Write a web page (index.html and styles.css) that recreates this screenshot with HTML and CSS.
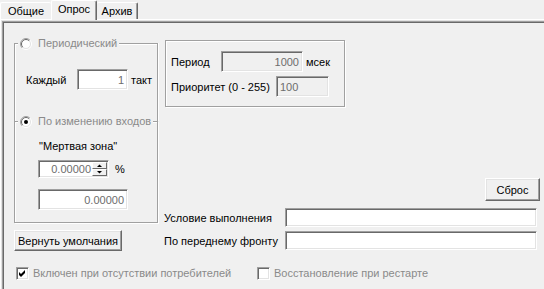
FILE: index.html
```html
<!doctype html>
<html lang="ru">
<head>
<meta charset="utf-8">
<title>Опрос</title>
<link rel="stylesheet" href="styles.css">
</head>
<body>

<div class="tabs">
  <div class="tab tab-first">Общие</div>
  <div class="tab active">Опрос</div>
  <div class="tab tab-last">Архив</div>
</div>

<div class="panel">
  <div class="main">

    <div class="left">
      <fieldset class="group group-top">
        <legend>
          <svg class="radio" width="12" height="12" viewBox="0 0 12 12">
            <circle cx="6" cy="6" r="5" fill="#fff"/>
            <path d="M2.1 9.9A5.5 5.5 0 0 1 9.9 2.1" fill="none" stroke="#a0a0a0"/>
            <path d="M9.9 2.1A5.5 5.5 0 0 1 2.1 9.9" fill="none" stroke="#fff"/>
            <path d="M2.8 9.2A4.5 4.5 0 0 1 9.2 2.8" fill="none" stroke="#696969"/>
            <path d="M9.2 2.8A4.5 4.5 0 0 1 2.8 9.2" fill="none" stroke="#e3e3e3"/>
          </svg><span class="dis">Периодический</span>
        </legend>
        <div class="every">
          <span class="every-lbl">Каждый</span>
          <span class="edit num every-edit">1</span>
          <span class="unit">такт</span>
        </div>
      </fieldset>

      <fieldset class="group group-bottom">
        <legend>
          <svg class="radio" width="12" height="12" viewBox="0 0 12 12">
            <circle cx="6" cy="6" r="5" fill="#fff"/>
            <path d="M2.1 9.9A5.5 5.5 0 0 1 9.9 2.1" fill="none" stroke="#a0a0a0"/>
            <path d="M9.9 2.1A5.5 5.5 0 0 1 2.1 9.9" fill="none" stroke="#fff"/>
            <path d="M2.8 9.2A4.5 4.5 0 0 1 9.2 2.8" fill="none" stroke="#696969"/>
            <path d="M9.2 2.8A4.5 4.5 0 0 1 2.8 9.2" fill="none" stroke="#e3e3e3"/>
            <circle cx="6" cy="6" r="2" fill="#000"/>
          </svg><span class="dis">По изменению входов</span>
        </legend>
        <div class="deadzone">"Мертвая зона"</div>
        <div class="spin-row">
          <span class="edit num spin">
            <span class="spin-val">0.00000</span>
            <span class="updown">
              <span class="ub"><svg width="5" height="3" viewBox="0 0 5 3"><polygon points="0,3 5,3 2.5,0.5" fill="#000"/></svg></span>
              <span class="ub"><svg width="5" height="3" viewBox="0 0 5 3"><polygon points="0,0 5,0 2.5,2.5" fill="#000"/></svg></span>
            </span>
          </span>
          <span class="pct">%</span>
        </div>
        <div class="edit num zone-edit">0.00000</div>
      </fieldset>

      <button class="btn defaults">Вернуть умолчания</button>
    </div>

    <div class="right">
      <div class="frame">
        <div class="frow">
          <span class="period-lbl">Период</span>
          <span class="edit num off period-edit">1000</span>
          <span class="unit">мсек</span>
        </div>
        <div class="frow frow-2">
          <span class="prio-lbl">Приоритет (0 - 255)</span>
          <span class="edit off prio-edit">100</span>
        </div>
      </div>

      <button class="btn reset">Сброс</button>

      <div class="field">
        <span class="field-lbl">Условие выполнения</span>
        <span class="edit field-edit"></span>
      </div>
      <div class="field field-2">
        <span class="field-lbl">По переднему фронту</span>
        <span class="edit field-edit"></span>
      </div>
    </div>

  </div>

  <div class="checks">
    <label class="check check-first">
      <span class="cb"><svg width="7" height="7" viewBox="0 0 7 7"><polygon points="0,2 2,4 6,0 6,3 2,7 0,5" fill="#000"/></svg></span>
      <span class="dis">Включен при отсутствии потребителей</span>
    </label>
    <label class="check">
      <span class="cb"></span>
      <span class="dis">Восстановление при рестарте</span>
    </label>
  </div>
</div>

</body>
</html>
```

FILE: styles.css
```css
* {
  box-sizing: border-box;
}
body {
  margin: 0;
  width: 544px;
  height: 289px;
  overflow: hidden;
  background: #f0f0f0;
  color: #000;
  font-family: "Liberation Sans", Arial, sans-serif;
  font-size: 11px;
}
.dis {
  color: #8a8a8a;
}

/* tabs */
.tabs {
  display: flex;
  align-items: flex-start;
  height: 19px;
}
.tab {
  margin-top: 2px;
  height: 17px;
  line-height: 17px;
  text-align: center;
  border-top: 1px solid #fff;
  border-left: 1px solid #fff;
  border-radius: 2px 2px 0 0;
}
.tab-first {
  width: 51px;
}
.tab.active {
  margin-top: 0;
  width: 46px;
  height: 20px;
  position: relative;
  z-index: 1;
  background: #f0f0f0;
  border-right: 1px solid #696969;
  box-shadow: inset -1px 0 0 #a0a0a0;
}
.tab-last {
  width: 41px;
  border-left: none;
  border-right: 1px solid #696969;
  box-shadow: inset -1px 0 0 #a0a0a0;
}

/* page */
.panel {
  height: 270px;
  border-top: 1px solid #fff;
  border-left: 1px solid #fff;
  box-shadow: inset 1px 1px 0 #e3e3e3, inset 2px 2px 0 #a0a0a0, inset 3px 3px 0 #696969;
}
.main {
  display: flex;
  align-items: flex-start;
}
.left {
  width: 144px;
  margin-left: 13px;
  display: flex;
  flex-direction: column;
  align-items: flex-start;
}
.right {
  flex: 1;
  display: flex;
  flex-direction: column;
}

/* group boxes */
.group {
  width: 144px;
  margin: 0;
  padding: 0;
  min-width: 0;
  border: 1px solid #a0a0a0;
  box-shadow: inset 1px 1px 0 #fff, 1px 1px 0 #fff;
}
.group legend {
  margin-left: 3px;
  padding: 0 2px;
  height: 13px;
  line-height: 13px;
  background: #f0f0f0;
  white-space: nowrap;
}
.radio {
  display: inline-block;
  vertical-align: top;
  margin-top: 1px;
  margin-right: 6px;
}
.group-top {
  margin-top: 17px;
  padding-bottom: 31px;
  border-bottom: none;
  box-shadow: inset 1px 1px 0 #fff, 1px 0 0 #fff;
}
.group-bottom {
  margin-top: -6px;
  padding-bottom: 12px;
}
.every {
  display: flex;
  align-items: center;
  margin-top: 19px;
  padding-left: 11px;
}
.every-lbl {
  width: 51px;
}
.every-edit {
  width: 51px;
}
.unit {
  margin-left: 3px;
}
.deadzone {
  margin-top: 12px;
  padding-left: 24px;
  line-height: 13px;
}
.spin-row {
  display: flex;
  align-items: center;
  margin-top: 7px;
  padding-left: 23px;
}
.pct {
  margin-left: 6px;
}
.zone-edit {
  width: 90px;
  height: 18px;
  margin-top: 11px;
  margin-left: 23px;
}

/* edits */
.edit {
  display: flex;
  align-items: center;
  height: 21px;
  padding: 0 3px;
  background: #fff;
  color: #6d6d6d;
  border: 1px solid;
  border-color: #a0a0a0 #fff #fff #a0a0a0;
  box-shadow: inset 1px 1px 0 #696969, inset -1px -1px 0 #e3e3e3;
}
.edit.num {
  justify-content: flex-end;
}
.edit.off {
  background: #f0f0f0;
}
.spin {
  width: 71px;
  height: 18px;
  padding: 1px 1px 1px 3px;
}
.spin-val {
  flex: 1;
  text-align: right;
  padding-right: 1px;
}
.updown {
  display: flex;
  flex-direction: column;
  width: 15px;
  height: 100%;
}
.ub {
  flex: 1;
  display: flex;
  align-items: center;
  justify-content: center;
  background: #f0f0f0;
  border: 1px solid;
  border-color: #fff #696969 #696969 #fff;
}

/* buttons */
.btn {
  margin: 0;
  padding: 0;
  font: inherit;
  color: #000;
  background: #f0f0f0;
  border: 1px solid;
  border-color: #fff #696969 #696969 #fff;
  box-shadow: inset -1px -1px 0 #a0a0a0, inset 1px 1px 0 #e3e3e3;
}
.defaults {
  width: 108px;
  height: 21px;
  margin-top: 7px;
}
.reset {
  align-self: flex-end;
  width: 55px;
  height: 23px;
  margin-top: 71px;
  margin-right: 4px;
}

/* right frame */
.frame {
  width: 180px;
  height: 67px;
  margin: 20px 0 0 7px;
  padding: 10px 0 0 5px;
  border: 1px solid #a0a0a0;
  box-shadow: inset 1px 1px 0 #fff, 1px 1px 0 #fff;
}
.frow {
  display: flex;
  align-items: center;
}
.frow-2 {
  margin-top: 4px;
}
.period-lbl {
  width: 50px;
}
.period-edit {
  width: 82px;
}
.prio-lbl {
  width: 105px;
}
.prio-edit {
  width: 53px;
}

/* condition fields */
.field {
  display: flex;
  align-items: center;
  margin-top: 7px;
  margin-left: 6px;
}
.field-2 {
  margin-top: 4px;
}
.field-lbl {
  width: 121px;
}
.field-edit {
  width: 252px;
  height: 19px;
}

/* checkboxes */
.checks {
  display: flex;
  margin-top: 16px;
  padding-left: 15px;
}
.check {
  display: flex;
  align-items: center;
  line-height: 13px;
}
.check-first {
  width: 241px;
}
.cb {
  display: flex;
  align-items: center;
  justify-content: center;
  width: 13px;
  height: 13px;
  margin-right: 4px;
  background: #fff;
  border: 1px solid;
  border-color: #a0a0a0 #fff #fff #a0a0a0;
  box-shadow: inset 1px 1px 0 #696969, inset -1px -1px 0 #e3e3e3;
}
```
